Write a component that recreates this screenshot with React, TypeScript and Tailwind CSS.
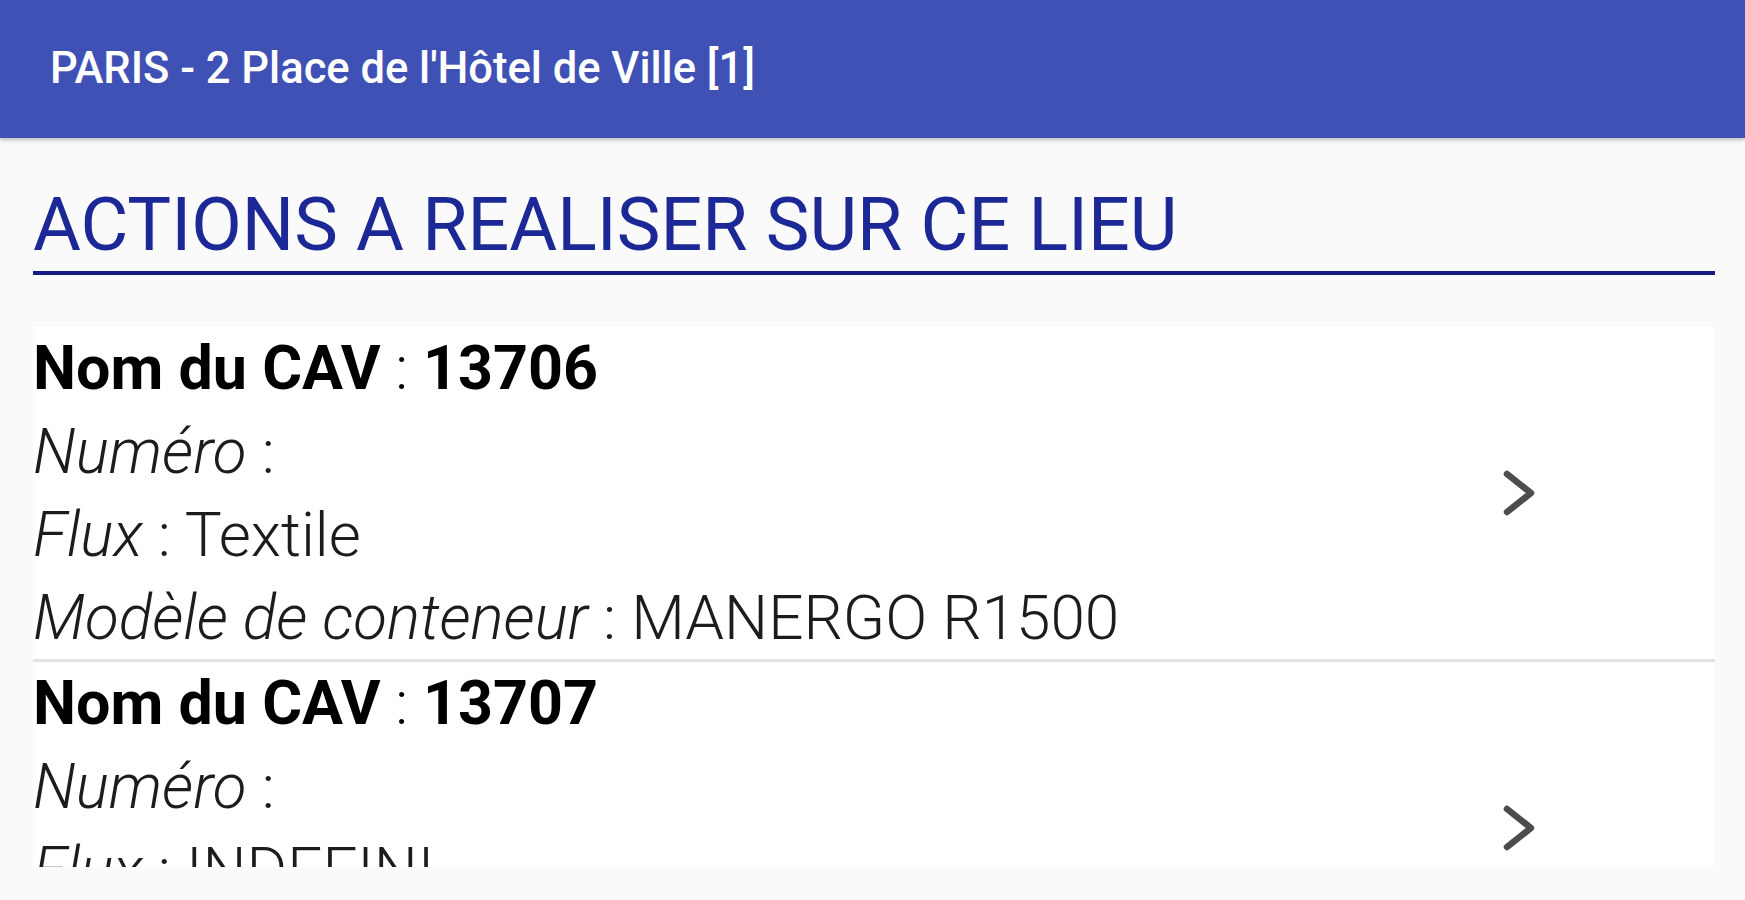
import { Fragment } from 'react';

type Cav = {
    nom: string;
    numero: string;
    flux: string;
    modele: string;
};

const CAVS: Cav[] = [
    { nom: '13706', numero: '', flux: 'Textile', modele: 'MANERGO R1500' },
    { nom: '13707', numero: '', flux: 'INDEFINI', modele: 'MANERGO R1500' },
];

function Chevron() {
    return (
        <svg width="40" height="52" viewBox="0 0 40 52" fill="none">
            <polyline
                points="8,7 32,26 8,45"
                stroke="#4d4d4d"
                strokeWidth={6.5}
                strokeLinecap="round"
                strokeLinejoin="round"
            />
        </svg>
    );
}

function CavRow({ cav, last }: { cav: Cav; last: boolean }) {
    return (
        <div className={`flex items-center ${last ? '' : 'border-b-[3px] border-[#e2e2e2]'}`}>
            <div className="flex-1 text-[62px] leading-[83px] text-[#1c1c1c] font-light">
                {/* Name */}
                <div className="text-black text-[61px]">
                    <span className="font-bold">Nom du CAV</span>
                    <span className="font-light"> : </span>
                    <span className="font-bold">{cav.nom}</span>
                </div>
                <div>
                    <span className="italic">Numéro</span> : {cav.numero}
                </div>
                <div>
                    <span className="italic">Flux</span> : {cav.flux}
                </div>
                <div>
                    <span className="italic">Modèle de conteneur</span> : {cav.modele}
                </div>
            </div>
            <div className="pr-[176px] pl-4 flex items-center">
                <Chevron />
            </div>
        </div>
    );
}

export default function App() {
    return (
        <div
            className="h-[900px] w-full bg-[#fafafa] flex flex-col overflow-hidden"
            style={{ fontFamily: 'Roboto, "Noto Sans", sans-serif' }}
        >
            {/* App bar */}
            <header className="h-[138px] shrink-0 bg-[#3f51b5] px-[50px] flex items-center shadow-[0_2px_4px_rgba(0,0,0,0.25)] relative z-10">
                <h1 className="text-white text-[43.5px] font-medium leading-none">
                    PARIS - 2 Place de l'Hôtel de Ville [1]
                </h1>
            </header>

            <main className="flex-1 flex flex-col pl-[33px] pr-[30px] min-h-0">
                {/* Section title */}
                <div className="mt-[50px] pb-[9px] border-b-4 border-[#161c84]">
                    <h2 className="text-[73.5px] leading-[74px] font-normal text-[#1b2896]">
                        ACTIONS A REALISER SUR CE LIEU
                    </h2>
                </div>

                {/* List */}
                <div className="mt-[52px] h-[540px] overflow-hidden bg-white">
                    {CAVS.map((cav, i) => (
                        <Fragment key={cav.nom}>
                            <CavRow cav={cav} last={i === CAVS.length - 1} />
                        </Fragment>
                    ))}
                </div>
            </main>
        </div>
    );
}
